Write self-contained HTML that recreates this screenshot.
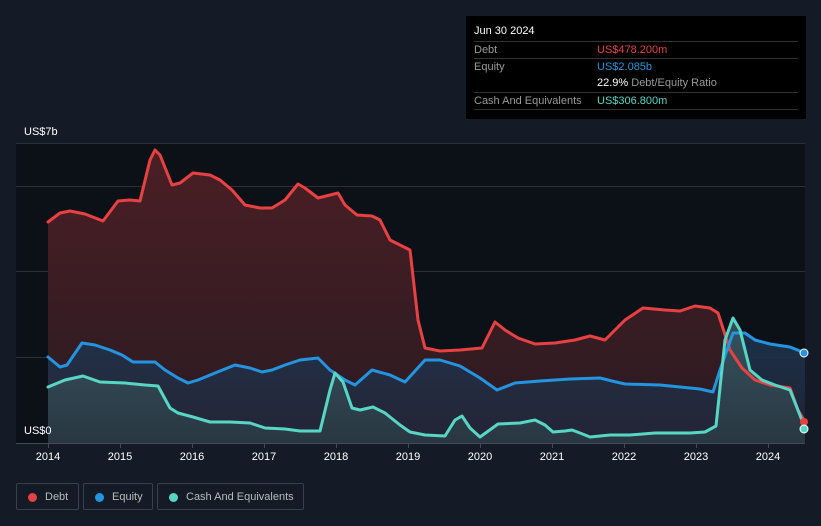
<!DOCTYPE html>
<html><head><meta charset="utf-8"><style>
body{margin:0;width:821px;height:526px;background:#151b26;font-family:"Liberation Sans",sans-serif;overflow:hidden;position:relative}
.tip{position:absolute;left:466px;top:16px;width:340px;height:103px;background:#000}
.tip .h{position:absolute;left:8px;top:9px;color:#fff;font-size:11px}
.row{position:absolute;left:8px;width:324px;border-top:1px solid #333;height:17px;font-size:11px;color:#999;line-height:16px}
.row span{position:absolute;left:123px}
.leg{position:absolute;top:483px;height:27px;border:1px solid #3a404a;border-radius:2px;color:#bbb;font-size:11px;line-height:27px;box-sizing:border-box}
.leg i{position:absolute;top:9px;left:11px;width:9px;height:9px;border-radius:50%}
.leg b{font-weight:normal;position:absolute;left:28px}
.ax{position:absolute;top:451px;color:#fff;font-size:11px;width:40px;text-align:center}
</style></head><body>
<div class="tip"><div class="h">Jun 30 2024</div>
<div class="row" style="top:25px">Debt<span style="color:#e84142">US$478.200m</span></div>
<div class="row" style="top:42px">Equity<span style="color:#2394df">US$2.085b</span></div>
<div class="row" style="top:59px;border-top:none"><span style="color:#fff">22.9% <em style="font-style:normal;color:#999">Debt/Equity Ratio</em></span></div>
<div class="row" style="top:76px">Cash And Equivalents<span style="color:#58d6c5">US$306.800m</span></div>
<div class="row" style="top:93px;height:0"></div>
</div>
<div style="position:absolute;left:24px;top:126px;color:#fff;font-size:11px">US$7b</div>
<svg style="position:absolute;left:0;top:0" width="821" height="526">
<defs>
<linearGradient id="gd" x1="0" y1="0" x2="0" y2="1"><stop offset="0" stop-color="#4a1f24"/><stop offset="1" stop-color="#2a1a22"/></linearGradient>
<linearGradient id="ge" x1="0" y1="0" x2="0" y2="1"><stop offset="0" stop-color="#1f3550"/><stop offset="1" stop-color="#222638"/></linearGradient>
<linearGradient id="gc" x1="0" y1="0" x2="0" y2="1"><stop offset="0" stop-color="#3a5a62"/><stop offset="1" stop-color="#2a3a44"/></linearGradient>
</defs>
<rect x="16" y="143" width="789" height="300" fill="#0c1118"/>
<g stroke="#2a2f38" stroke-width="1"><line x1="16" y1="143.5" x2="805" y2="143.5"/><line x1="16" y1="186.5" x2="805" y2="186.5"/><line x1="16" y1="271.5" x2="805" y2="271.5"/><line x1="16" y1="357.5" x2="805" y2="357.5"/></g>
<polygon fill="url(#gd)" points="48,443 48,222 60,213 70,211 85,214 103,221 118,201 130,200 140,201 150,160 155,150 160,155 172,185 180,183 193,173 210,175 220,180 232,190 245,205 260,208 272,208 285,200 298,184 305,188 318,198 330,195 338,193 345,205 357,215 372,216 380,220 390,240 400,245 410,250 418,320 425,348 440,351 460,350 482,348 495,322 505,330 518,338 535,344 555,343 575,340 590,336 605,340 625,320 643,308 665,310 680,311 695,306 710,308 718,313 730,350 742,368 755,380 770,385 790,388 798,410 805,422 805,443"/>
<polygon fill="url(#ge)" opacity="0.85" points="48,443 48,357 60,367 67,365 82,343 95,345 110,350 122,355 133,362 155,362 165,370 178,378 188,383 198,380 215,373 235,365 250,368 262,372 272,370 285,365 300,360 318,358 330,370 345,380 355,385 372,370 390,375 405,382 425,360 440,360 460,366 480,378 497,390 515,383 540,381 570,379 600,378 612,381 625,384 660,385 700,389 713,392 720,370 733,333 745,333 755,340 770,344 790,347 805,353 805,443"/>
<polygon fill="url(#gc)" opacity="0.85" points="48,443 48,387 65,380 83,376 100,382 125,383 145,385 158,386 170,408 178,413 193,417 210,422 230,422 250,423 265,428 285,429 300,431 320,431 330,390 335,373 343,382 352,408 360,410 373,407 385,413 400,425 410,432 425,435 445,436 455,420 462,416 470,428 480,437 498,424 520,423 535,420 545,425 553,432 565,431 572,430 580,433 590,437 610,435 630,435 655,433 690,433 705,432 716,426 725,340 733,318 740,330 750,370 762,380 775,385 790,390 805,428 805,443"/>
<g fill="none" stroke-width="3" stroke-linejoin="round" stroke-linecap="round">
<polyline stroke="#e84142" points="48,222 60,213 70,211 85,214 103,221 118,201 130,200 140,201 150,160 155,150 160,155 172,185 180,183 193,173 210,175 220,180 232,190 245,205 260,208 272,208 285,200 298,184 305,188 318,198 330,195 338,193 345,205 357,215 372,216 380,220 390,240 400,245 410,250 418,320 425,348 440,351 460,350 482,348 495,322 505,330 518,338 535,344 555,343 575,340 590,336 605,340 625,320 643,308 665,310 680,311 695,306 710,308 718,313 730,350 742,368 755,380 770,385 790,388 798,410 805,422"/>
<polyline stroke="#2394df" points="48,357 60,367 67,365 82,343 95,345 110,350 122,355 133,362 155,362 165,370 178,378 188,383 198,380 215,373 235,365 250,368 262,372 272,370 285,365 300,360 318,358 330,370 345,380 355,385 372,370 390,375 405,382 425,360 440,360 460,366 480,378 497,390 515,383 540,381 570,379 600,378 612,381 625,384 660,385 700,389 713,392 720,370 733,333 745,333 755,340 770,344 790,347 805,353"/>
<polyline stroke="#58d6c5" points="48,387 65,380 83,376 100,382 125,383 145,385 158,386 170,408 178,413 193,417 210,422 230,422 250,423 265,428 285,429 300,431 320,431 330,390 335,373 343,382 352,408 360,410 373,407 385,413 400,425 410,432 425,435 445,436 455,420 462,416 470,428 480,437 498,424 520,423 535,420 545,425 553,432 565,431 572,430 580,433 590,437 610,435 630,435 655,433 690,433 705,432 716,426 725,340 733,318 740,330 750,370 762,380 775,385 790,390 805,428"/>
</g>
<circle cx="804" cy="353" r="4" fill="#2394df" stroke="#fff" stroke-width="1"/>
<circle cx="804" cy="422" r="4" fill="#e84142"/>
<circle cx="804" cy="429" r="4" fill="#58d6c5" stroke="#fff" stroke-width="1"/>
<line x1="16" y1="443.5" x2="805" y2="443.5" stroke="#444a54"/>
<g stroke="#444a54"><line x1="48.5" y1="443" x2="48.5" y2="448"/><line x1="120.5" y1="443" x2="120.5" y2="448"/><line x1="192.5" y1="443" x2="192.5" y2="448"/><line x1="264.5" y1="443" x2="264.5" y2="448"/><line x1="336.5" y1="443" x2="336.5" y2="448"/><line x1="408.5" y1="443" x2="408.5" y2="448"/><line x1="480.5" y1="443" x2="480.5" y2="448"/><line x1="552.5" y1="443" x2="552.5" y2="448"/><line x1="624.5" y1="443" x2="624.5" y2="448"/><line x1="696.5" y1="443" x2="696.5" y2="448"/><line x1="768.5" y1="443" x2="768.5" y2="448"/></g>
</svg>
<div style="position:absolute;left:24px;top:425px;color:#fff;font-size:11px">US$0</div>
<div class="ax" style="left:28px">2014</div><div class="ax" style="left:100px">2015</div><div class="ax" style="left:172px">2016</div><div class="ax" style="left:244px">2017</div><div class="ax" style="left:316px">2018</div><div class="ax" style="left:388px">2019</div><div class="ax" style="left:460px">2020</div><div class="ax" style="left:532px">2021</div><div class="ax" style="left:604px">2022</div><div class="ax" style="left:676px">2023</div><div class="ax" style="left:748px">2024</div>
<div class="leg" style="left:16px;width:63px"><i style="background:#e84142"></i><b>Debt</b></div>
<div class="leg" style="left:83px;width:70px"><i style="background:#2394df"></i><b>Equity</b></div>
<div class="leg" style="left:157px;width:147px"><i style="background:#58d6c5"></i><b>Cash And Equivalents</b></div>
</body></html>
